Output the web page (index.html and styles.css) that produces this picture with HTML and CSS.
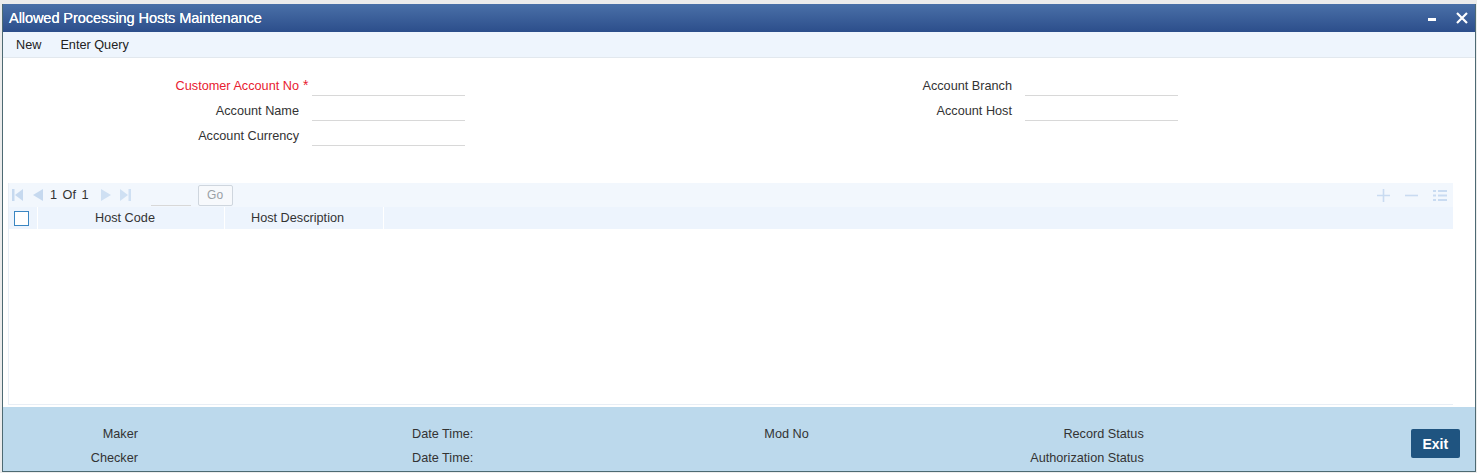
FILE: index.html
```
<!DOCTYPE html>
<html>
<head>
<meta charset="utf-8">
<title>Allowed Processing Hosts Maintenance</title>
<link rel="stylesheet" href="styles.css">
</head>
<body>
<div class="window">
  <div class="titlebar">
    <span class="title">Allowed Processing Hosts Maintenance</span>
    <div class="win-actions">
      <svg class="ico-min" width="12" height="12" viewBox="0 0 12 12"><rect x="2" y="5" width="8" height="3" fill="#fff"/></svg>
      <svg class="ico-close" width="14" height="14" viewBox="0 0 14 14"><path d="M2 2 L12 12 M12 2 L2 12" stroke="#fff" stroke-width="2.2"/></svg>
    </div>
  </div>
  <div class="toolbar">
    <span class="tb-item">New</span>
    <span class="tb-item">Enter Query</span>
  </div>
  <div class="form">
    <div class="col col-left">
      <div class="row"><label class="lbl req">Customer Account No<span class="star">*</span></label><span class="field"></span></div>
      <div class="row"><label class="lbl">Account Name</label><span class="field"></span></div>
      <div class="row"><label class="lbl">Account Currency</label><span class="field"></span></div>
    </div>
    <div class="col col-right">
      <div class="row"><label class="lbl">Account Branch</label><span class="field"></span></div>
      <div class="row"><label class="lbl">Account Host</label><span class="field"></span></div>
    </div>
  </div>
  <div class="grid">
    <div class="pager">
      <div class="pager-left">
        <svg width="11" height="12" viewBox="0 0 11 12"><rect x="0" y="0" width="2.5" height="12" fill="#c6d9ef"/><path d="M11 0 L11 12 L3 6 Z" fill="#c6d9ef"/></svg>
        <svg class="prev" width="10" height="12" viewBox="0 0 10 12"><path d="M10 0 L10 12 L0 6 Z" fill="#c6d9ef"/></svg>
        <span class="pg-text">1 Of 1</span>
        <svg class="next" width="10" height="12" viewBox="0 0 10 12"><path d="M0 0 L0 12 L10 6 Z" fill="#cfe0f3"/></svg>
        <svg class="last" width="11" height="12" viewBox="0 0 11 12"><path d="M0 0 L0 12 L8 6 Z" fill="#cfe0f3"/><rect x="8.5" y="0" width="2.5" height="12" fill="#cfe0f3"/></svg>
        <span class="pg-input"></span>
        <span class="go">Go</span>
      </div>
      <div class="pager-right">
        <svg width="13" height="13" viewBox="0 0 13 13"><path d="M6.5 0 V13 M0 6.5 H13" stroke="#c9dbf1" stroke-width="1.6"/></svg>
        <svg width="13" height="13" viewBox="0 0 13 13"><path d="M0 6.5 H13" stroke="#c9dbf1" stroke-width="1.6"/></svg>
        <svg width="14" height="11" viewBox="0 0 14 11"><g fill="#c9dbf1"><rect x="0" y="0" width="3" height="2"/><rect x="5" y="0" width="9" height="2"/><rect x="0" y="4.5" width="3" height="2"/><rect x="5" y="4.5" width="9" height="2"/><rect x="0" y="9" width="3" height="2"/><rect x="5" y="9" width="9" height="2"/></g></svg>
      </div>
    </div>
    <div class="grid-head">
      <div class="hc hc-check"><span class="checkbox"></span></div>
      <div class="hc hc-code">Host Code</div>
      <div class="hc hc-desc">Host Description</div>
      <div class="hc hc-rest"></div>
    </div>
  </div>
  <div class="footer">
    <div class="f-col f-maker">
      <span>Maker</span>
      <span>Checker</span>
    </div>
    <div class="f-col f-date">
      <span>Date Time:</span>
      <span>Date Time:</span>
    </div>
    <div class="f-col f-mod">
      <span>Mod No</span>
      <span>&nbsp;</span>
    </div>
    <div class="f-col f-status">
      <span>Record Status</span>
      <span>Authorization Status</span>
    </div>
    <button class="exit">Exit</button>
  </div>
</div>
</body>
</html>
```

FILE: styles.css
```
* { box-sizing: border-box; }
html, body { margin: 0; padding: 0; }
body {
  background: #ececec;
  font-family: "Liberation Sans", Arial, sans-serif;
  font-size: 13px;
  color: #333;
  padding: 4px 1px 0 2px;
  height: 473px;
  overflow: hidden;
}
.window {
  width: 1474px;
  height: 468px;
  border: 1px solid #4d6a73;
  border-top: none;
  background: #fff;
  display: flex;
  flex-direction: column;
}
.titlebar {
  height: 28px;
  flex: none;
  background: linear-gradient(#4a70a8, #2c4e8b);
  display: flex;
  align-items: center;
  justify-content: space-between;
  padding: 0 6px 0 6px;
}
.title {
  color: #fff;
  font-size: 14.6px;
  letter-spacing: -0.1px;
  text-shadow: 0 0 0.4px #fff;
}
.win-actions { display: flex; align-items: center; gap: 17px; }
.ico-min { margin-top: 2px; }
.toolbar {
  height: 26px;
  flex: none;
  background: #eef5fd;
  border-bottom: 1px solid #e2e8ee;
  display: flex;
  align-items: center;
  padding-left: 13px;
  gap: 19px;
}
.tb-item { color: #222; font-size: 12.7px; }
.form {
  height: 125px;
  flex: none;
  display: flex;
  padding-top: 16px;
}
.col { display: flex; flex-direction: column; }
.row { display: flex; height: 25px; }
.lbl {
  line-height: 24px;
  text-align: right;
  font-size: 12.7px;
  color: #333;
  position: relative;
}
.col-left .lbl { width: 296px; }
.col-right { margin-left: 347px; }
.col-right .lbl { width: 200px; }
.lbl.req { color: #e8202f; }
.star { position: absolute; left: 300px; top: -1px; color: #e8202f; font-size: 14px; }
.field {
  margin-left: 13px;
  width: 153px;
  height: 22px;
  border-bottom: 1px solid #d8d8d8;
}
.grid {
  margin-left: 5px;
  width: 1445px;
  height: 222px;
  flex: none;
  border-left: 1px solid #e8eef5;
  border-bottom: 1px solid #e8eef5;
}
.pager {
  height: 24px;
  background: #f2f7fd;
  display: flex;
  align-items: center;
  justify-content: space-between;
}
.pager-left { display: flex; align-items: center; padding-left: 3px; }
.pager-left .prev { margin-left: 10px; }
.pg-text { margin-left: 7px; color: #333; font-size: 12.7px; word-spacing: 2px; }
.pager-left .next { margin-left: 12px; }
.pager-left .last { margin-left: 9px; }
.pg-input {
  margin-left: 20px;
  width: 40px;
  height: 20px;
  margin-top: 1px;
  border-bottom: 1px solid #d8d8d8;
}
.go {
  margin-left: 7px;
  width: 35px;
  height: 21px;
  border: 1px solid #cfd6de;
  border-radius: 2px;
  color: #9aa0a6;
  font-size: 12px;
  display: flex;
  align-items: center;
  justify-content: center;
  background: #f7f9fc;
}
.pager-right { display: flex; align-items: center; gap: 15px; padding-right: 6px; }
.grid-head {
  height: 22px;
  display: flex;
  gap: 1px;
}
.hc {
  background: #edf4fd;
  height: 22px;
  line-height: 23px;
  font-size: 12.7px;
  color: #333;
}
.hc-check { width: 28px; display: flex; align-items: center; padding-left: 5px; }
.checkbox {
  width: 15px;
  height: 15px;
  border: 1.5px solid #3a86c2;
  background: #fff;
  display: block;
}
.hc-code { width: 186px; padding-left: 57px; }
.hc-desc { width: 158px; padding-left: 26px; }
.hc-rest { flex: 1; }
.footer {
  margin-top: 2px;
  flex: 1;
  background: #bcd9ec;
  display: flex;
  align-items: flex-start;
  padding-top: 20px;
}
.f-col { display: flex; flex-direction: column; gap: 9px; font-size: 12.7px; color: #333; line-height: 15px; }
.f-maker { width: 135px; align-items: flex-end; }
.f-date { margin-left: 274px; }
.f-mod { margin-left: 291px; }
.f-status { width: 200px; margin-left: 135px; align-items: flex-end; }
.exit {
  margin-left: 267px;
  margin-top: 2px;
  width: 49px;
  height: 29px;
  border: none;
  border-radius: 2px;
  background: #1f5480;
  color: #fff;
  font-family: "Liberation Sans", Arial, sans-serif;
  font-weight: bold;
  font-size: 14px;
  padding: 0;
}
```
